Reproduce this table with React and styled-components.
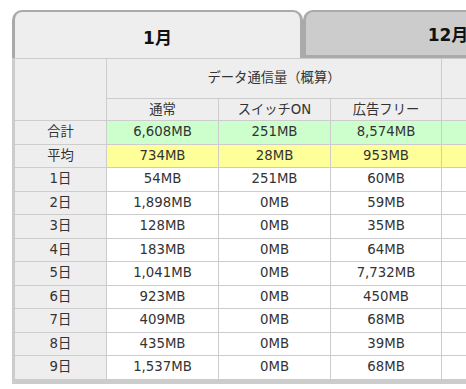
import React from "react";
import styled, { createGlobalStyle } from "styled-components";

const GlobalStyle = createGlobalStyle`
  html, body {
    margin: 0;
    padding: 0;
    overflow: hidden;
    background: #fff;
  }
  body {
    font-family: "DejaVu Sans", "Noto Sans CJK JP", sans-serif;
    color: #333;
  }
`;

const Page = styled.div`
  width: 900px;
  padding: 10px 0 0 12px;
`;

const TabBar = styled.div`
  display: flex;
  width: 581px;
`;

const Tab = styled.div`
  box-sizing: border-box;
  width: ${(p) => (p.$active ? "291px" : "290px")};
  height: 48px;
  display: flex;
  align-items: center;
  justify-content: center;
  border-style: solid;
  border-color: #aaa;
  border-width: ${(p) => (p.$active ? "2px 3px 0 3px" : "2px 3px 3px 3px")};
  border-radius: 10px 10px 0 0;
  background: ${(p) => (p.$active ? "#eee" : "#ccc")};
  font-size: 17px;
  font-weight: bold;
  color: #111;
  padding-top: ${(p) => (p.$active ? "2px" : "0")};
`;

const Panel = styled.div`
  display: inline-block;
  border-left: 3px solid #ccc;
  border-bottom: 4px solid #ccc;
`;

const Table = styled.table`
  table-layout: fixed;
  border-collapse: separate;
  border-spacing: 0;
  border-top: 1px solid #ccc;
  font-size: 13.3px;
`;

const Col = styled.col`
  width: ${(p) => p.$w}px;
`;

const tones = {
  sum: "#ccffcc",
  avg: "#ffff99",
  head: "#eee",
  plain: "#fff",
};

const Cell = styled.td`
  box-sizing: border-box;
  padding: 0;
  text-align: center;
  border-right: 1px solid #ccc;
  border-bottom: 1px solid #ccc;
  line-height: 22.5px;
  white-space: nowrap;
  background: ${(p) => tones[p.$tone || "plain"]};
`;

const HeadCell = styled.th`
  box-sizing: border-box;
  padding: 0;
  text-align: center;
  font-weight: normal;
  border-right: 1px solid #ccc;
  border-bottom: 1px solid #ccc;
  background: #eee;
  white-space: nowrap;
  line-height: ${(p) => p.$lh}px;
`;

const groups = [
  {
    title: "データ通信量（概算）",
    heads: ["通常", "スイッチON", "広告フリー"],
    sum: ["6,608MB", "251MB", "8,574MB"],
    avg: ["734MB", "28MB", "953MB"],
    days: [
      ["54MB", "251MB", "60MB"],
      ["1,898MB", "0MB", "59MB"],
      ["128MB", "0MB", "35MB"],
      ["183MB", "0MB", "64MB"],
      ["1,041MB", "0MB", "7,732MB"],
      ["923MB", "0MB", "450MB"],
      ["409MB", "0MB", "68MB"],
      ["435MB", "0MB", "39MB"],
      ["1,537MB", "0MB", "68MB"],
    ],
  },
  {
    // next group sits past the right edge of the view
    title: "",
    heads: ["", "", ""],
    sum: ["", "", ""],
    avg: ["", "", ""],
    days: Array.from({ length: 9 }, () => ["", "", ""]),
  },
];

const widths = [92, 112, 112, 111, 112, 112, 112];

export default function App() {
  return (
    <>
      <GlobalStyle />
      <Page>
        <TabBar>
          <Tab $active>1月</Tab>
          <Tab>12月</Tab>
        </TabBar>
        <Panel>
          <Table>
            <colgroup>
              {widths.map((w, i) => (
                <Col key={i} $w={w} />
              ))}
            </colgroup>
            <thead>
              <tr>
                <HeadCell rowSpan={2} $lh={61} />
                {groups.map((g, gi) => (
                  <HeadCell key={gi} colSpan={3} $lh={38.5}>
                    {g.title}
                  </HeadCell>
                ))}
              </tr>
              <tr>
                {groups.flatMap((g, gi) =>
                  g.heads.map((s, i) => (
                    <HeadCell key={gi + "-" + i} $lh={21.5}>
                      {s}
                    </HeadCell>
                  ))
                )}
              </tr>
            </thead>
            <tbody>
              <tr>
                <Cell $tone="head">合計</Cell>
                {groups.flatMap((g, gi) => g.sum.map((v, i) => <Cell key={gi + "-" + i} $tone="sum">{v}</Cell>))}
              </tr>
              <tr>
                <Cell $tone="head">平均</Cell>
                {groups.flatMap((g, gi) => g.avg.map((v, i) => <Cell key={gi + "-" + i} $tone="avg">{v}</Cell>))}
              </tr>
              {groups[0].days.map((_, d) => (
                <tr key={d}>
                  <Cell $tone="head">{d + 1}日</Cell>
                  {groups.flatMap((g, gi) => g.days[d].map((v, i) => <Cell key={gi + "-" + i}>{v}</Cell>))}
                </tr>
              ))}
            </tbody>
          </Table>
        </Panel>
      </Page>
    </>
  );
}
